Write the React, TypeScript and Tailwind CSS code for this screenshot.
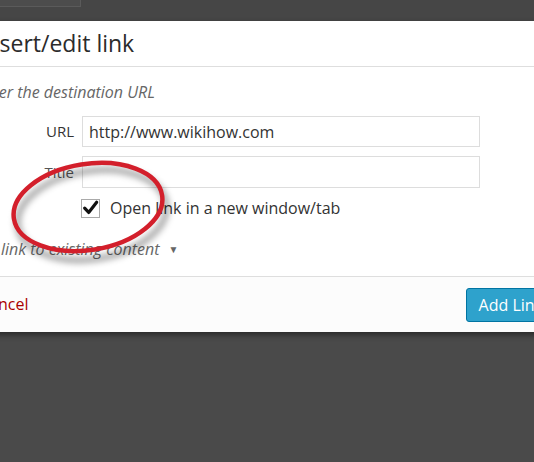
export default function App() {
  const font = { fontFamily: '"Open Sans", "Noto Sans", sans-serif' };
  return (
    <div className="relative h-[462px] w-[534px] overflow-hidden bg-[#4a4a4a]" style={font}>
      {/* top admin strip */}
      <div className="h-[21px] bg-[#464646]">
        <div className="h-[7px] w-[81px] border-b border-r border-[#5a5a5a] bg-[#4c4c4c]" />
      </div>

      {/* dialog */}
      <div className="ml-[-37px] w-[640px] bg-white shadow-[0_3px_6px_rgba(0,0,0,0.45)]">
        <div className="flex h-[46px] items-center border-b border-[#dedede] pl-[16px]">
          <h1 className="text-[23px] text-[#2b2b2b]">Insert/edit link</h1>
        </div>

        <div className="pl-[16px] pt-[14px]">
          <p className="ml-[-3px] text-[16px] italic leading-[22px] text-[#666]">Enter the destination URL</p>

          <div className="mt-[13px] flex items-center gap-[8px] pl-[1px]">
            <span className="w-[94px] text-right text-[15px] text-[#333]">URL</span>
            <div className="flex h-[31px] w-[398px] items-center border border-[#ddd] px-[6px] text-[16px] text-[#333]">
              http://www.wikihow.com
            </div>
          </div>

          <div className="mt-[9px] flex items-center gap-[8px] pl-[1px]">
            <span className="w-[94px] text-right text-[15px] text-[#555]">Title</span>
            <div className="h-[32px] w-[398px] border border-[#ddd]" />
          </div>

          <div className="mt-[8px] flex items-center pl-[102px]">
            <div className="flex h-[19px] w-[19px] items-center justify-center border border-[#aaa] bg-white">
              <svg viewBox="0 0 16 16" className="h-[18px] w-[18px]">
                <path d="M2.5 8.2 L6.3 12.2 L13.8 2.6" fill="none" stroke="#111" strokeWidth="3" strokeLinecap="round" strokeLinejoin="round" />
              </svg>
            </div>
            <span className="ml-[10px] text-[16px] text-[#333]">Open link in a new window/tab</span>
          </div>

          <div className="mt-[17px] flex items-center pb-[15px]">
            <span className="text-[16px] italic text-[#666]">Or link to existing content</span>
            <span className="ml-[9px] text-[10px] text-[#666]">▼</span>
          </div>
        </div>

        <div className="flex h-[56px] items-center justify-between border-t border-[#dedede] bg-[#fcfcfc] pl-[16px]">
          <span className="mt-[-2px] text-[16px] text-[#a00]">Cancel</span>
          <div className="mr-[47px] flex h-[34px] items-center rounded-[3px] border border-[#0074a2] bg-[#2ea2cc] px-[12px] text-[16px] text-white">
            Add Link
          </div>
        </div>
      </div>

      {/* red annotation ellipse */}
      <svg className="pointer-events-none absolute left-0 top-[150px]" width="200" height="120" viewBox="0 0 200 120">
        <defs>
          <filter id="sh" x="-30%" y="-30%" width="160%" height="160%">
            <feGaussianBlur stdDeviation="3" />
          </filter>
        </defs>
        <ellipse cx="92" cy="65" rx="75" ry="44" transform="rotate(-9 92 65)" fill="none" stroke="rgba(0,0,0,0.35)" strokeWidth="6" filter="url(#sh)" />
        <ellipse cx="88" cy="57" rx="75" ry="43" transform="rotate(-9 88 57)" fill="none" stroke="#d31f2b" strokeWidth="4.5" />
      </svg>
    </div>
  );
}
